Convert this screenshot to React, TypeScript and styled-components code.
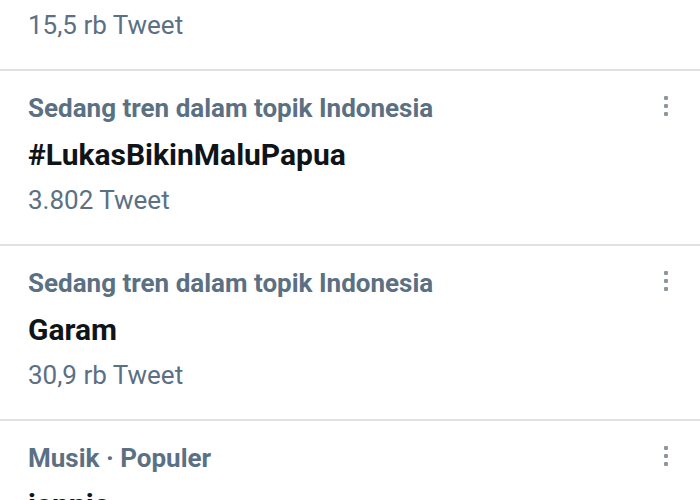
import React from "react";
import styled, { createGlobalStyle } from "styled-components";

const Global = createGlobalStyle`
  html, body { margin: 0; padding: 0; background: #ffffff; }
  body { font-family: Roboto, "Noto Sans", Arial, sans-serif; -webkit-font-smoothing: antialiased; }
  #root { width: 700px; height: 500px; overflow: hidden; }
`;

const List = styled.div`
  display: flex;
  flex-direction: column;
  width: 700px;
`;

const Item = styled.div<{ $first?: boolean }>`
  display: flex;
  flex-direction: column;
  flex-shrink: 0;
  padding: ${(p) => (p.$first ? "10px" : "20px")} 32px 29px 28px;
  border-top: ${(p) => (p.$first ? "none" : "2px solid #dde1e4")};
`;

const HeaderRow = styled.div`
  display: flex;
  align-items: center;
  justify-content: space-between;
  height: 34px;
`;

const Context = styled.div`
  font-size: 26px;
  font-weight: 700;
  color: #5b7083;
  line-height: 34px;
  white-space: nowrap;
`;

const Title = styled.div`
  margin-top: 10px;
  height: 40px;
  font-size: 30px;
  font-weight: 700;
  color: #0f1419;
  line-height: 40px;
  white-space: nowrap;
`;

const Count = styled.div<{ $first?: boolean }>`
  margin-top: ${(p) => (p.$first ? "0" : "10px")};
  height: 30px;
  font-size: 26px;
  font-weight: 400;
  color: #5b7083;
  line-height: 30px;
  white-space: nowrap;
`;

const Dots = styled.div`
  display: flex;
  flex-direction: column;
  gap: 4px;
  margin-top: -4px;
`;

const Dot = styled.span`
  width: 4px;
  height: 4px;
  border-radius: 1px;
  background: #8e979f;
`;

const More = () => (
  <Dots>
    <Dot />
    <Dot />
    <Dot />
  </Dots>
);

type Trend = { context: string; title: string; count?: string };

const trends: Trend[] = [
  { context: "Sedang tren dalam topik Indonesia", title: "#LukasBikinMaluPapua", count: "3.802 Tweet" },
  { context: "Sedang tren dalam topik Indonesia", title: "Garam", count: "30,9 rb Tweet" },
  { context: "Musik · Populer", title: "jennie", count: "12 rb Tweet" },
];

export default function App() {
  return (
    <>
      <Global />
      <List>
        <Item $first>
          <Count $first>15,5 rb Tweet</Count>
        </Item>
        {trends.map((t, i) => (
          <Item key={i}>
            <HeaderRow>
              <Context>{t.context}</Context>
              <More />
            </HeaderRow>
            <Title>{t.title}</Title>
            {t.count && <Count>{t.count}</Count>}
          </Item>
        ))}
      </List>
    </>
  );
}
